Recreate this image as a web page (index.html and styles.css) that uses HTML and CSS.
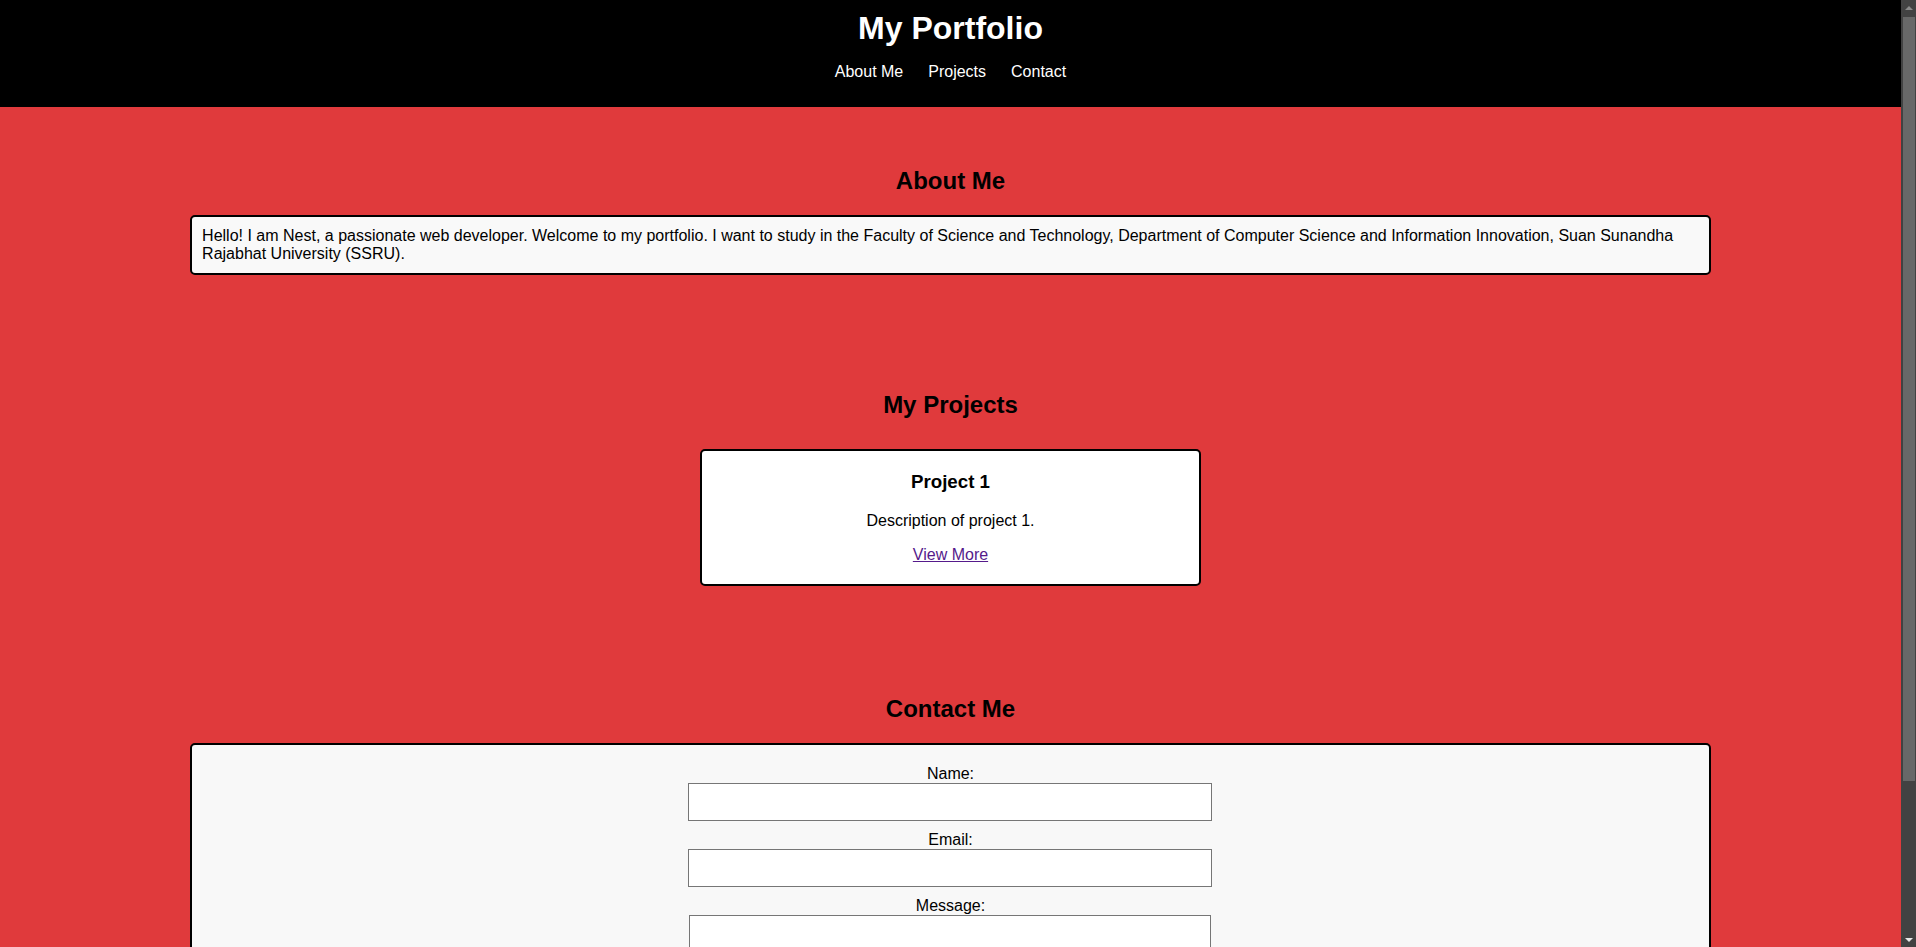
FILE: index.html
```html
<!DOCTYPE html>
<html lang="en">
<head>
<meta charset="UTF-8">
<title>My Portfolio</title>
<link rel="stylesheet" href="styles.css">
</head>
<body>
<header class="site-header">
  <h1 class="site-title">My Portfolio</h1>
  <nav>
    <ul class="nav-list">
      <li><a class="nav-link" href="#about">About Me</a></li>
      <li><a class="nav-link" href="#projects">Projects</a></li>
      <li><a class="nav-link" href="#contact">Contact</a></li>
    </ul>
  </nav>
</header>
<main>
  <section class="section" id="about">
    <h2 class="section-title">About Me</h2>
    <p class="about-box">Hello! I am Nest, a passionate web developer. Welcome to my portfolio. I want to study in the Faculty of Science and Technology, Department of Computer Science and Information Innovation, Suan Sunandha Rajabhat University (SSRU).</p>
  </section>
  <section class="section" id="projects">
    <h2 class="section-title">My Projects</h2>
    <div class="project-list">
      <div class="project-card">
        <h3 class="project-title">Project 1</h3>
        <p class="project-desc">Description of project 1.</p>
        <a class="project-link" href="#">View More</a>
      </div>
    </div>
  </section>
  <section class="section section-contact" id="contact">
    <h2 class="section-title">Contact Me</h2>
    <form class="contact-box">
      <label class="form-label" for="name">Name:</label>
      <input class="form-input" type="text" id="name" name="name">
      <label class="form-label" for="email">Email:</label>
      <input class="form-input" type="email" id="email" name="email">
      <label class="form-label" for="message">Message:</label>
      <textarea class="form-textarea" id="message" name="message"></textarea>
      <button class="form-button" type="submit">Send</button>
    </form>
  </section>
</main>
<footer class="site-footer">
  <p class="footer-text">&copy; 2024 My Portfolio</p>
</footer>
<div class="fake-scrollbar" aria-hidden="true">
  <div class="scroll-arrow scroll-arrow-up"></div>
  <div class="scroll-thumb"></div>
  <div class="scroll-arrow scroll-arrow-down"></div>
</div>
</body>
</html>
```

FILE: styles.css
```css
html {
  scrollbar-width: none;
}

html::-webkit-scrollbar {
  display: none;
}

body {
  margin: 0 15px 0 0;
  background: #e03a3c;
  color: #000;
  font-family: "Liberation Sans", Arial, sans-serif;
  font-size: 16px;
}

.site-header {
  background: #000;
  color: #fff;
  text-align: center;
  padding: 10px 0;
}

.site-title {
  margin: 0;
  font-size: 32px;
  font-weight: bold;
}

.nav-list {
  list-style: none;
  margin: 16px 0;
  padding: 0;
  display: flex;
  justify-content: center;
  gap: 25px;
}

.nav-link {
  color: #fff;
  text-decoration: none;
}

.section {
  width: 80%;
  margin: 0 auto;
  padding: 40px 0;
}

.section-contact {
  padding-top: 39px;
}

.section-title {
  text-align: center;
  font-size: 24px;
  margin: 20px 0;
}

.about-box {
  background: #f9f9f9;
  border: 2px solid #000;
  border-radius: 5px;
  padding: 10px;
  margin: 16px 0;
}

.project-list {
  display: flex;
  justify-content: center;
}

.project-card {
  box-sizing: border-box;
  width: 501px;
  margin: 10px;
  padding: 20px;
  background: #fff;
  border: 2px solid #000;
  border-radius: 5px;
  text-align: center;
}

.project-title {
  font-size: 18.72px;
  margin: 0 0 18.72px;
}

.project-desc {
  margin: 0 0 16px;
}

.project-link {
  color: #551a8b;
  text-decoration: underline;
}

.contact-box {
  display: flex;
  flex-direction: column;
  align-items: center;
  background: #f8f8f8;
  border: 2px solid #000;
  border-radius: 5px;
  padding: 20px;
  margin: 0;
}

.form-label {
  color: #000;
}

.form-input,
.form-textarea {
  background: #fff;
  color: #000;
  border: 1px solid #767676;
  border-radius: 0;
  padding: 10px;
  margin: 0 0 10px;
  font-family: "Liberation Sans", Arial, sans-serif;
  font-size: 13.333px;
  line-height: 16px;
}

.form-input {
  width: 502px;
}

.form-textarea {
  width: 500px;
  height: 32px;
}

.form-button {
  background: #000;
  color: #fff;
  border: none;
  padding: 10px 20px;
  font-family: "Liberation Sans", Arial, sans-serif;
  font-size: 16px;
  cursor: pointer;
}

.site-footer {
  background: #000;
  color: #fff;
  text-align: center;
  padding: 20px 0;
}

.footer-text {
  margin: 0;
}

.fake-scrollbar {
  position: fixed;
  top: 0;
  right: 0;
  width: 15px;
  height: 100vh;
  background: #424242;
  display: flex;
  flex-direction: column;
}

.scroll-arrow {
  height: 15px;
  flex: none;
  display: flex;
  align-items: center;
  justify-content: center;
}

.scroll-arrow::before {
  content: "";
  width: 0;
  height: 0;
  border-left: 4px solid transparent;
  border-right: 4px solid transparent;
}

.scroll-arrow-up::before {
  border-bottom: 4px solid #8a8a8a;
}

.scroll-arrow-down::before {
  border-top: 4px solid #e8e8e8;
}

.scroll-thumb {
  flex: none;
  height: 764px;
  margin: 2px 1px 0 2px;
  background: #686868;
}

.scroll-arrow-down {
  margin-top: auto;
}
```
